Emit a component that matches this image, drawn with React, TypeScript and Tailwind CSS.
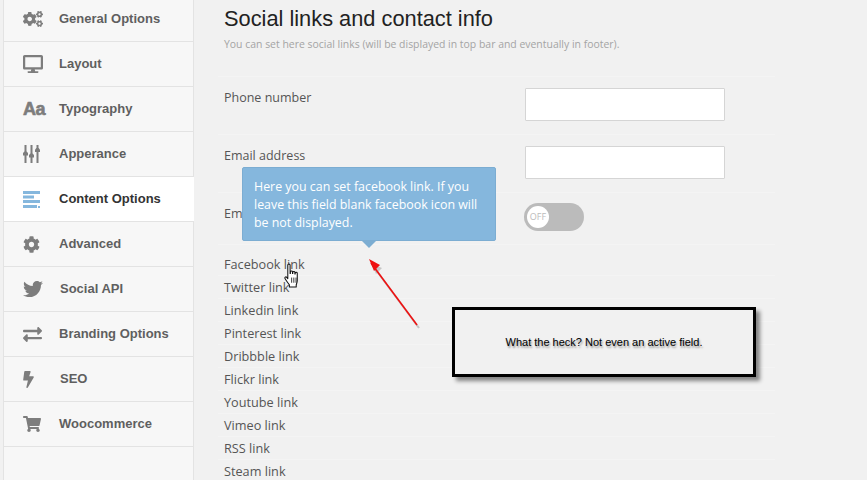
import React from "react";
import { FaCogs, FaDesktop, FaCog, FaTwitter, FaExchangeAlt, FaBolt, FaShoppingCart } from "react-icons/fa";

const SlidersIcon = () => (
  <svg width="17" height="18" viewBox="0 0 17 18" fill="#7d7d7d">
    <rect x="1.500" y="0" width="2" height="18" />
    <path d="M0 8l1.500-1.500h2L5 8v2.500H0z" />
    <rect x="7.500" y="0" width="2" height="18" />
    <path d="M6 10l1.500-1.500h2L11 10v2.500H6z" />
    <rect x="13.500" y="0" width="2" height="18" />
    <path d="M12 4.500L13.500 3h2L17 4.500V7h-5z" />
  </svg>
);

const LinesIcon = () => (
  <svg width="17" height="17" viewBox="0 0 17 17" fill="#85b7dd">
    <rect x="0" y="0" width="17" height="3" /><rect x="0" y="4.500" width="11" height="3" /><rect x="0" y="9" width="17" height="3" /><rect x="0" y="14" width="14" height="3" /><rect x="15" y="15" width="2" height="2" />
  </svg>
);

const items: { label: string; icon: React.ReactNode; active?: boolean; ml?: string }[] = [
  { label: "General Options", icon: <FaCogs size={20} color="#7d7d7d" /> },
  { label: "Layout", icon: <FaDesktop size={20} color="#7d7d7d" /> },
  { label: "Typography", icon: <span className="text-[#7d7d7d] font-bold text-[18px] tracking-[-0.5px] leading-none [-webkit-text-stroke:0.6px_#7d7d7d]">Aa</span> },
  { label: "Apperance", icon: <SlidersIcon /> },
  { label: "Content Options", icon: <LinesIcon />, active: true },
  { label: "Advanced", icon: <FaCog size={17} color="#7d7d7d" /> },
  { label: "Social API", icon: <FaTwitter size={20} color="#7d7d7d" />, ml: "ml-[17px]" },
  { label: "Branding Options", icon: <FaExchangeAlt size={19} color="#7d7d7d" /> },
  { label: "SEO", icon: <FaBolt size={17} color="#7d7d7d" className="-ml-[3px]" />, ml: "ml-[17px]" },
  { label: "Woocommerce", icon: <FaShoppingCart size={18} color="#7d7d7d" /> },
];

const links = ["Facebook link", "Twitter link", "Linkedin link", "Pinterest link", "Dribbble link", "Flickr link", "Youtube link", "Vimeo link", "RSS link", "Steam link"];

export default function App() {
  return (
    <div className="relative w-[867px] h-[480px] overflow-hidden bg-[#f1f1f1] flex font-['Open_Sans',sans-serif]">
      <aside className="ml-[3px] w-[191px] h-[484px] -mt-[3px] bg-[#f7f7f7] border-x border-[#e3e3e3] flex flex-col shrink-0 font-['Liberation_Sans',sans-serif]">
        {items.map((it) => (
          <div
            key={it.label}
            className={`h-[45px] shrink-0 flex items-center border-b border-[#e3e3e3] pl-[19px] text-[13px] font-bold ${it.active ? "bg-white text-[#333] -mr-px" : "text-[#5f5f5f]"}`}
          >
            <span className="w-[20px] shrink-0 flex justify-start">{it.icon}</span>
            <span className={it.ml ?? "ml-[16px]"}>{it.label}</span>
          </div>
        ))}
      </aside>

      <main className="ml-[30px] w-[501px] shrink-0 text-[#555] text-[12.5px]">
        <h1 className="mt-[6px] font-['Liberation_Sans',sans-serif] text-[21.8px] leading-[26px] text-[#222]">Social links and contact info</h1>
        <p className="mt-[5px] text-[10.45px] leading-[14px] text-[#a4a4a4]">You can set here social links (will be displayed in top bar and eventually in footer).</p>
        <div className="mt-[25px] border-t border-[#f4f4f4] h-[58px] pt-[11px] flex justify-between -ml-[6px] pl-[6px] -mr-[50px] pr-[50px]">
          <span className="mt-px leading-[17px]">Phone number</span>
          <input className="w-[200px] h-[33px] bg-white border border-[#d5d5d5] rounded-[1px]" readOnly />
        </div>
        <div className="border-t border-[#f4f4f4] h-[58px] pt-[11px] flex justify-between -ml-[6px] pl-[6px] -mr-[50px] pr-[50px]">
          <span className="mt-px leading-[17px]">Email address</span>
          <input className="w-[200px] h-[33px] bg-white border border-[#d5d5d5] rounded-[1px]" readOnly />
        </div>
        <div className="border-t border-[#f4f4f4] h-[52px] pt-[10px] flex justify-between -ml-[6px] pl-[6px] -mr-[50px] pr-[50px]">
          <span className="mt-[2px] leading-[17px]">Email link</span>
          <div className="mr-[141px] w-[60px] h-[28px] rounded-full bg-[#bbb] p-[3px]">
            <div className="w-[22px] h-[22px] rounded-full bg-white text-[9px] leading-[22px] text-center text-[#bbb]">OFF</div>
          </div>
        </div>
        <div className="border-t border-[#f4f4f4] pt-[8px] -ml-[6px] -mr-[50px]">
          {links.map((l) => (
            <div key={l} className="h-[23px] leading-[23px] text-[12.7px] border-b border-[#f4f4f4] pl-[6px]">{l}</div>
          ))}
        </div>
      </main>

      {/* tooltip */}
      <div className="absolute left-[242px] top-[167px] w-[254px] h-[74px] bg-[#85b7dd] border border-[#7cadd2] rounded-[2px] pl-[11px] pr-[10px] pt-[10px] text-white text-[12.4px] leading-[18px]">
        Here you can set facebook link. If you leave this field blank facebook icon will be not displayed.
        <div className="absolute left-[118px] top-[72px] w-0 h-0 border-x-[8px] border-x-transparent border-t-[8px] border-t-[#7cadd2]" />
      </div>

      {/* red arrow */}
      <svg className="absolute left-[360px] top-[250px]" width="70" height="90" viewBox="0 0 70 90">
        <line x1="13" y1="16" x2="59" y2="78" stroke="#999" strokeWidth="2" opacity="0.5" />
        <polygon points="12,14 22,18 16,24" fill="#999" opacity="0.5" />
        <line x1="11" y1="13" x2="57" y2="75" stroke="#ee1111" strokeWidth="1.6" />
        <polygon points="9,9 20,15 14,21" fill="#ee1111" />
      </svg>

      {/* hand cursor */}
      <svg className="absolute left-[283px] top-[263px]" width="20" height="26" viewBox="0 0 18 25">
        <path d="M4 2c0-1.300 2.200-1.300 2.200 0v8h.3V8.500c0-1.200 2-1.200 2 0V10h.3V9c0-1.200 2-1.200 2 0v1.500h.3v-.7c0-1.200 2-1.200 2 0v7c0 2-.7 3-1 4.200V23H5.500v-2C4.500 19.500 2.500 17 1.300 15c-.7-1.200.8-2.300 1.700-1.200L4 15z" fill="#fff" stroke="#111" strokeWidth="1" strokeLinejoin="round" />
        <path d="M7.700 14v5M9.800 14v5M11.900 14v5" stroke="#111" strokeWidth="0.8" />
      </svg>

      {/* annotation */}
      <div className="absolute left-[452px] top-[307px] w-[304px] h-[70px] border-[3px] border-black shadow-[4px_4px_4px_rgba(0,0,0,0.45)] bg-[#f1f1f1] flex items-center justify-center font-['Liberation_Sans',sans-serif] text-[11px] text-black [text-shadow:1px_2px_2px_rgba(0,0,0,0.4)]">
        What the heck? Not even an active field.
      </div>
    </div>
  );
}
